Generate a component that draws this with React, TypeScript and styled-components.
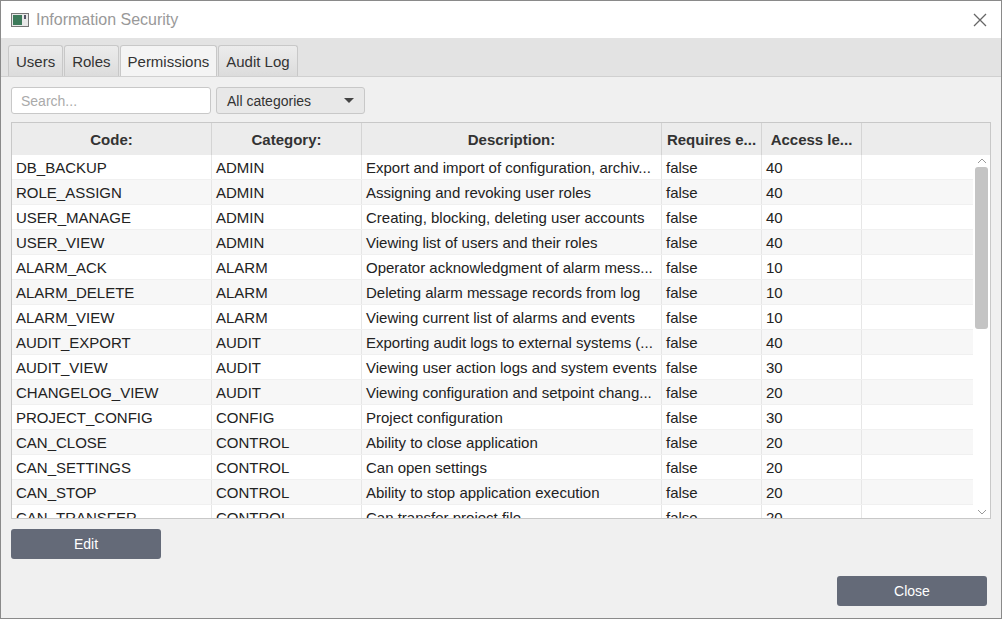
import React from 'react';
import styled, { createGlobalStyle } from 'styled-components';

const Global = createGlobalStyle`
  html, body { margin: 0; padding: 0; }
  body { font-family: 'Liberation Sans', Arial, sans-serif; font-size: 15px; color: #222; }
`;

const Window = styled.div`
  width: 1002px;
  height: 619px;
  box-sizing: border-box;
  border: 1px solid #8a8a8a;
  background: #f0f0f0;
  display: flex;
  flex-direction: column;
  overflow: hidden;
`;

const TitleBar = styled.div`
  height: 37px;
  background: #fff;
  display: flex;
  align-items: center;
  padding: 0 10px;
  gap: 7px;
  color: #999;
  font-size: 16px;
  flex-shrink: 0;
`;

const CloseX = styled.div`
  margin-left: auto;
  margin-right: 4px;
  display: flex;
`;

const TabBar = styled.div`
  height: 39px;
  background: #e3e3e3;
  border-bottom: 1px solid #d0d0d0;
  display: flex;
  align-items: flex-end;
  padding-left: 7px;
  gap: 1px;
  flex-shrink: 0;
  box-sizing: border-box;
`;

const Tab = styled.div<{ $active?: boolean }>`
  height: 31px;
  box-sizing: border-box;
  padding: 0 7px;
  display: flex;
  align-items: center;
  font-size: 15px;
  color: #333;
  border: 1px solid #c8c8c8;
  border-bottom: none;
  border-radius: 3px 3px 0 0;
  background: ${p => (p.$active ? '#f4f4f4' : 'linear-gradient(#ececec, #dcdcdc)')};
`;

const Body = styled.div`
  flex: 1;
  display: flex;
  flex-direction: column;
  padding: 10px 10px 12px 10px;
`;

const Filters = styled.div`
  display: flex;
  gap: 5px;
  margin-bottom: 8px;
`;

const Search = styled.input`
  width: 200px;
  height: 27px;
  box-sizing: border-box;
  border: 1px solid #c8c8c8;
  border-radius: 3px;
  padding: 0 9px;
  font: inherit;
  font-size: 14px;
  background: #fff;
  &::placeholder { color: #aaa; }
`;

const Combo = styled.div`
  width: 149px;
  height: 27px;
  box-sizing: border-box;
  border: 1px solid #c8c8c8;
  border-radius: 3px;
  background: #e8e8e8;
  display: flex;
  align-items: center;
  justify-content: space-between;
  padding: 0 10px;
  font-size: 14px;
  color: #333;
`;

const Arrow = styled.span`
  width: 0; height: 0;
  border-left: 5px solid transparent;
  border-right: 5px solid transparent;
  border-top: 5px solid #444;
`;

const TableBox = styled.div`
  width: 980px;
  height: 397px;
  box-sizing: border-box;
  border: 1px solid #c8c8c8;
  background: #fff;
  display: flex;
  flex-direction: column;
  overflow: hidden;
`;

const HeadRow = styled.div`
  display: flex;
  height: 32px;
  background: #ececec;
  flex-shrink: 0;
`;

const HeadCell = styled.div<{ $w: number }>`
  width: ${p => p.$w}px;
  flex-shrink: 0;
  box-sizing: border-box;
  border-right: 1px solid #d4d4d4;
  display: flex;
  align-items: center;
  justify-content: center;
  font-weight: bold;
  font-size: 15px;
  color: #333;
  white-space: nowrap;
`;

const Scroller = styled.div`
  flex: 1;
  display: flex;
  overflow: hidden;
`;

const Rows = styled.div`
  flex: 1;
  overflow: hidden;
`;

const Row = styled.div<{ $odd: boolean }>`
  display: flex;
  height: 25px;
  box-sizing: border-box;
  background: ${p => (p.$odd ? '#f7f7f7' : '#fff')};
  border-bottom: 1px solid #f0f0f0;
`;

const Cell = styled.div<{ $w: number }>`
  width: ${p => p.$w}px;
  flex-shrink: 0;
  box-sizing: border-box;
  border-right: 1px solid #e6e6e6;
  padding: 0 4px;
  display: flex;
  align-items: center;
  white-space: nowrap;
  overflow: hidden;
  font-size: 15px;
  color: #222;
`;

const ScrollBar = styled.div`
  width: 17px;
  display: flex;
  flex-direction: column;
  align-items: center;
  background: #fff;
`;

const ScrollBtn = styled.div`
  height: 12px;
  display: flex;
  align-items: center;
`;

const Thumb = styled.div`
  width: 13px;
  height: 162px;
  background: #c4c4c4;
  border-radius: 3px;
`;

const Button = styled.button`
  width: 150px;
  height: 30px;
  border: none;
  border-radius: 3px;
  background: #646a78;
  color: #fff;
  font: inherit;
  font-size: 14px;
`;

const EditBar = styled.div`
  margin-top: 10px;
`;

const Footer = styled.div`
  margin-top: auto;
  display: flex;
  justify-content: flex-end;
  padding-right: 4px;
`;

const Spacer = styled.div`
  flex: 1;
`;

const widths = [200, 150, 300, 100, 100, 112];

const data: [string, string, string, string, string][] = [
  ['DB_BACKUP', 'ADMIN', 'Export and import of configuration, archiv...', 'false', '40'],
  ['ROLE_ASSIGN', 'ADMIN', 'Assigning and revoking user roles', 'false', '40'],
  ['USER_MANAGE', 'ADMIN', 'Creating, blocking, deleting user accounts', 'false', '40'],
  ['USER_VIEW', 'ADMIN', 'Viewing list of users and their roles', 'false', '40'],
  ['ALARM_ACK', 'ALARM', 'Operator acknowledgment of alarm mess...', 'false', '10'],
  ['ALARM_DELETE', 'ALARM', 'Deleting alarm message records from log', 'false', '10'],
  ['ALARM_VIEW', 'ALARM', 'Viewing current list of alarms and events', 'false', '10'],
  ['AUDIT_EXPORT', 'AUDIT', 'Exporting audit logs to external systems (...', 'false', '40'],
  ['AUDIT_VIEW', 'AUDIT', 'Viewing user action logs and system events', 'false', '30'],
  ['CHANGELOG_VIEW', 'AUDIT', 'Viewing configuration and setpoint chang...', 'false', '20'],
  ['PROJECT_CONFIG', 'CONFIG', 'Project configuration', 'false', '30'],
  ['CAN_CLOSE', 'CONTROL', 'Ability to close application', 'false', '20'],
  ['CAN_SETTINGS', 'CONTROL', 'Can open settings', 'false', '20'],
  ['CAN_STOP', 'CONTROL', 'Ability to stop application execution', 'false', '20'],
  ['CAN_TRANSFER', 'CONTROL', 'Can transfer project file', 'false', '20'],
];

export default function App() {
  return (
    <Window>
      <Global />
      <TitleBar>
        <svg width="18" height="14" viewBox="0 0 18 14">
          <rect x="0.5" y="0.5" width="17" height="13" fill="#e8e8e8" stroke="#777" />
          <rect x="2" y="2" width="9" height="10" fill="#3c7a5a" />
          <rect x="13" y="2" width="2" height="4" fill="#556" />
        </svg>
        Information Security
        <CloseX>
          <svg width="14" height="14" viewBox="0 0 14 14">
            <path d="M1 1L13 13M13 1L1 13" stroke="#666" strokeWidth="1.3" />
          </svg>
        </CloseX>
      </TitleBar>
      <TabBar>
        <Tab>Users</Tab>
        <Tab>Roles</Tab>
        <Tab $active>Permissions</Tab>
        <Tab>Audit Log</Tab>
      </TabBar>
      <Body>
        <Filters>
          <Search placeholder="Search..." />
          <Combo>All categories<Arrow /></Combo>
        </Filters>
        <TableBox>
          <HeadRow>
            {['Code:', 'Category:', 'Description:', 'Requires e...', 'Access le...'].map((h, i) => (
              <HeadCell key={h} $w={widths[i]}>{h}</HeadCell>
            ))}
          </HeadRow>
          <Scroller>
            <Rows>
              {data.map((r, i) => (
                <Row key={r[0]} $odd={i % 2 === 1}>
                  {r.map((c, j) => (
                    <Cell key={j} $w={widths[j]}>{c}</Cell>
                  ))}
                  <Cell $w={112} />
                </Row>
              ))}
            </Rows>
            <ScrollBar>
              <ScrollBtn>
                <svg width="10" height="6" viewBox="0 0 10 6"><path d="M1 5L5 1L9 5" stroke="#999" fill="none" /></svg>
              </ScrollBtn>
              <Thumb />
              <Spacer />
              <ScrollBtn>
                <svg width="10" height="6" viewBox="0 0 10 6"><path d="M1 1L5 5L9 1" stroke="#999" fill="none" /></svg>
              </ScrollBtn>
            </ScrollBar>
          </Scroller>
        </TableBox>
        <EditBar>
          <Button>Edit</Button>
        </EditBar>
        <Footer>
          <Button>Close</Button>
        </Footer>
      </Body>
    </Window>
  );
}
